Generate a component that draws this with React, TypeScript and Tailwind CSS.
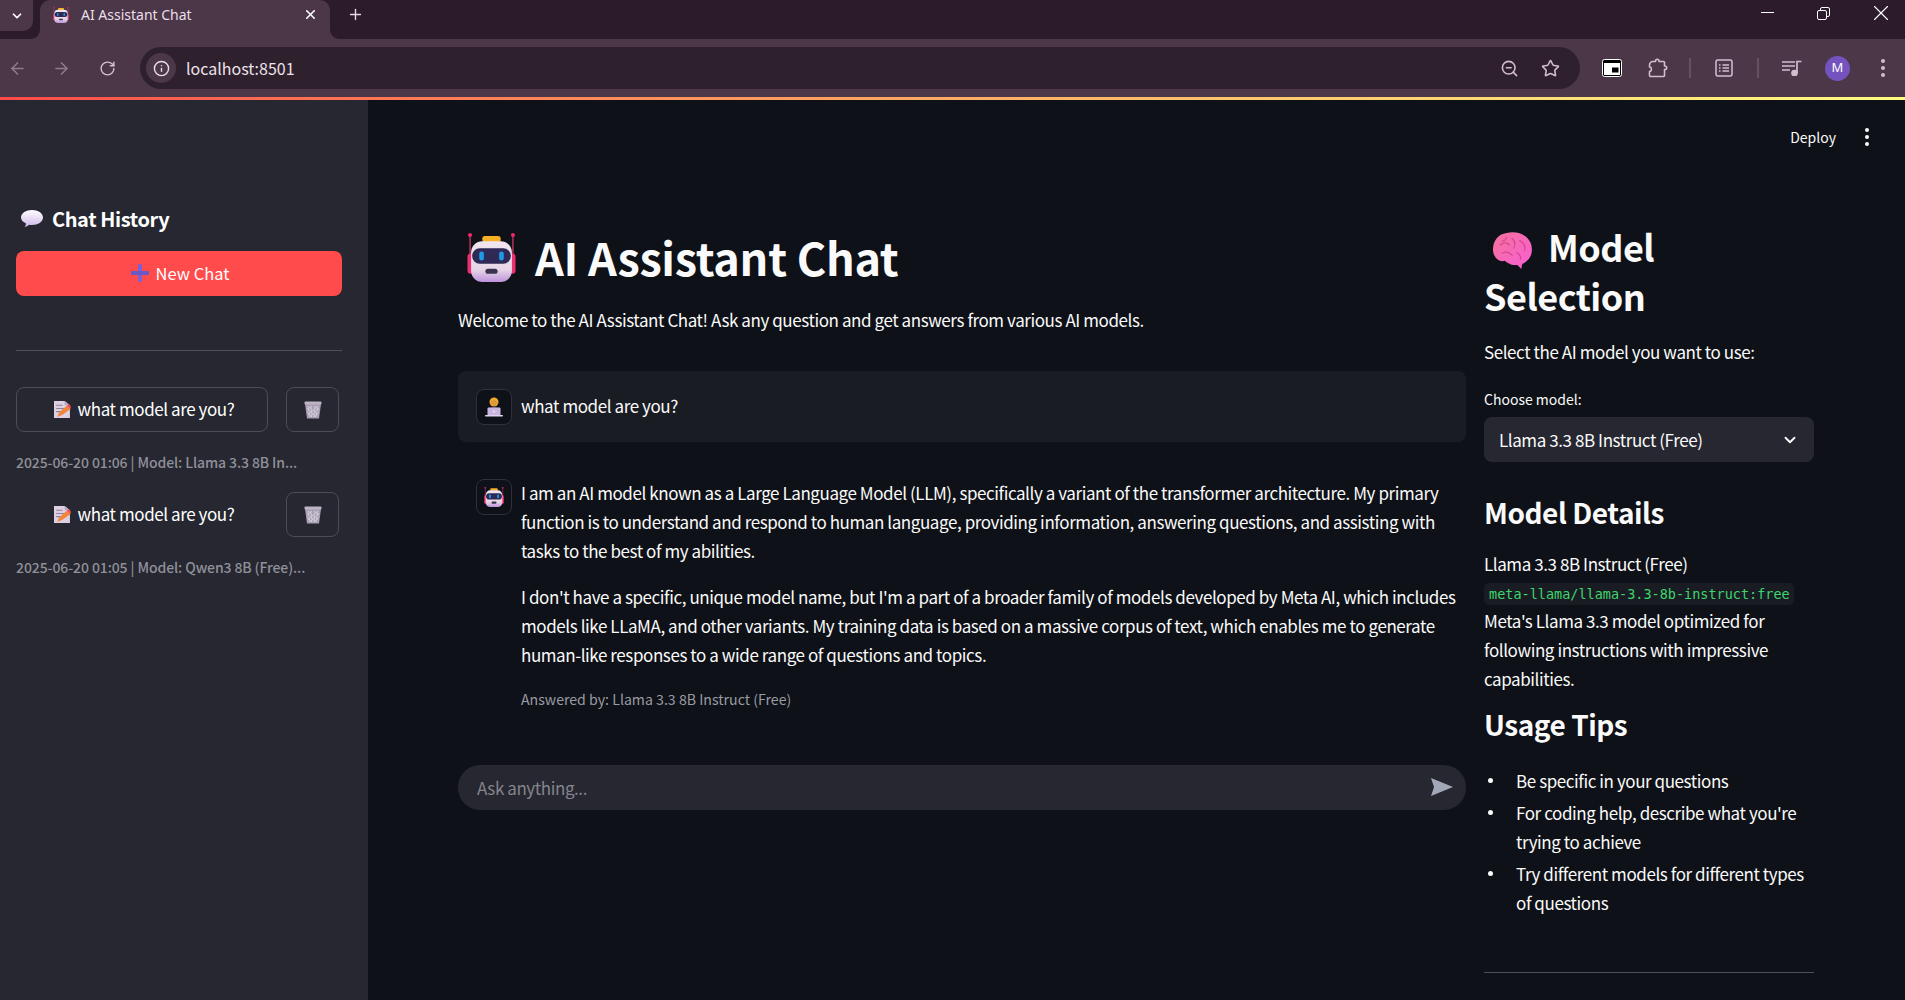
import { ArrowLeft, ArrowRight, ChevronDown, Info, Plus, RotateCw, Star, X, ZoomOut } from "lucide-react"

const font = { fontFamily: '"Noto Sans CJK SC", "Noto Sans", sans-serif' }

// emoji style drawings
const Robot = ({ size }: { size: number }) => (
    <svg width={size} height={size} viewBox="0 0 48 48">
        <defs>
            <linearGradient id="rb" x1="0" y1="0" x2="0" y2="1">
                <stop offset="0" stopColor="#f1e6f0" />
                <stop offset="0.7" stopColor="#e6d5e6" />
                <stop offset="1" stopColor="#bd93dc" />
            </linearGradient>
        </defs>
        <path d="M3 2v20M45 2v20" stroke="#d83a6a" strokeWidth="1.2" />
        <circle cx="3" cy="2" r="2" fill="#f0286a" />
        <circle cx="45" cy="2" r="2" fill="#f0286a" />
        <rect x="0.5" y="20" width="6" height="20" rx="3" fill="#f0306e" />
        <rect x="41.5" y="20" width="6" height="20" rx="3" fill="#f0306e" />
        <rect x="15" y="3" width="18" height="6" rx="2.5" fill="#f5b026" />
        <rect x="4" y="8" width="40" height="40" rx="11" fill="url(#rb)" />
        <rect x="5" y="15" width="38" height="15" rx="7.5" fill="#2f2a55" />
        <rect x="12" y="18" width="4.5" height="9" rx="2.2" fill="#1e9be8" />
        <rect x="31.5" y="18" width="4.5" height="9" rx="2.2" fill="#1e9be8" />
        <rect x="18" y="35" width="12" height="5" rx="2.5" fill="#3a3350" />
    </svg>
)

const Brain = () => (
    <svg width="41" height="37" viewBox="0 0 42 36" preserveAspectRatio="none">
        <defs>
            <linearGradient id="br" x1="0" y1="0" x2="1" y2="1">
                <stop offset="0" stopColor="#f4719a" />
                <stop offset="1" stopColor="#f95fd6" />
            </linearGradient>
        </defs>
        <path d="M1 17C1 9 6 2 15 1 23 -1 33 1 38 8 42 13 42 22 37 27 34 30 31 31 31 31L30 36 26 32C20 33 16 30 13 28 8 30 1 25 1 17Z" fill="url(#br)" />
        <path d="M8 13C12 9 16 10 18 13M20 6C24 9 24 13 22 16M28 8C33 11 35 15 33 19M10 21C14 18 18 20 21 23M25 20C28 21 30 24 29 27M15 5C14 8 12 9 10 9" stroke="#d23f8c" strokeWidth="1" fill="none" />
    </svg>
)

const Balloon = () => (
    <svg width="22" height="18" viewBox="0 0 22 18">
        <defs>
            <linearGradient id="bl" x1="0" y1="0" x2="0" y2="1">
                <stop offset="0" stopColor="#ffffff" />
                <stop offset="1" stopColor="#cdb8ea" />
            </linearGradient>
        </defs>
        <path d="M11 0C17 0 22 3 22 7.500 22 12 17 15 11 15 10 15 9 15 8 14.800 7 16 5 17 3.500 17 4.500 16 5 14.500 5 13.500 2 12 0 10 0 7.500 0 3 5 0 11 0Z" fill="url(#bl)" />
    </svg>
)

const PlusEmoji = () => (
    <svg width="18" height="18" viewBox="0 0 18 18">
        <rect x="7" y="0" width="4" height="18" rx="1.200" fill="#7a62d6" />
        <rect x="0" y="7" width="18" height="4" rx="1.200" fill="#6a58c8" />
    </svg>
)

const Memo = () => (
    <svg width="17" height="17" viewBox="0 0 16 16">
        <path d="M0 0H10L15 4V16H0Z" fill="#ddd0e2" />
        <path d="M10 0L15 4H10Z" fill="#b9a6c4" />
        <path d="M2 4H8M2 7H11M2 10H7" stroke="#8f8399" strokeWidth="1" />
        <path d="M3 15L5 10.500 12 4.500 15.500 7.500 8 13Z" fill="#f2853a" />
        <path d="M12 4.500L14 2.800 16 5.500 15.500 7.500Z" fill="#f0495e" />
    </svg>
)

const Trash = () => (
    <svg width="18" height="18" viewBox="0 0 18 18">
        <path d="M1 3H17L15 17.500H3Z" fill="#a79fb2" />
        <rect x="0.500" y="0.500" width="17" height="3" rx="1" fill="#bdb5c6" />
        <path d="M4 5L6 16M7 5L8 16M11 5L10 16M14 5L12 16M4 14L14 5M3.500 9L8 5M6 16L15 7M10 16L15 11M14 14L4 5M15 9L10 5M12 16L3 7M8 16L3 11" stroke="#e4dfe8" strokeWidth="0.500" />
    </svg>
)

const Technologist = () => (
    <svg width="20" height="20" viewBox="0 0 20 20">
        <circle cx="10" cy="5" r="4.500" fill="#f0a92c" />
        <circle cx="10" cy="6" r="3" fill="#d99a3e" />
        <path d="M4 12C5 10 15 10 16 12V18H4Z" fill="#7b6fb5" />
        <rect x="3.500" y="10.500" width="13" height="8" rx="1" fill="#c9b6e2" />
        <rect x="1" y="18" width="18" height="1.500" rx="0.700" fill="#e2d6ee" />
        <circle cx="10" cy="14.500" r="0.900" fill="#f2eef8" />
    </svg>
)

const ReadingList = () => (
    <svg width="18" height="18" viewBox="0 0 18 18" fill="none" stroke="#d3bdcf" strokeWidth="1.500">
        <rect x="1" y="1" width="16" height="16" rx="2" />
        <path d="M7.500 6H14M7.500 9H14M7.500 12H14" />
        <path d="M4 6H5.500M4 9H5.500M4 12H5.500" />
    </svg>
)

const Pip = () => (
    <svg width="20" height="18" viewBox="0 0 20 18">
        <rect x="0.500" y="0.500" width="19" height="17" rx="2" fill="#000" stroke="#fff" />
        <rect x="2" y="4" width="16" height="12" fill="#fff" />
        <rect x="10" y="8.500" width="6.500" height="5" fill="#000" />
    </svg>
)

const PuzzlePiece = () => (
    <svg width="21" height="20" viewBox="0 0 21 20" fill="none" stroke="#d3bdcf" strokeWidth="1.600" strokeLinejoin="round">
        <path d="M6 3.500H8.500C8.500 0.500 12 0.500 12 3.500H16.500C17.300 3.500 17.500 4 17.500 4.500V8C20.500 8 20.500 11.500 17.500 11.500V17.500C17.500 18.300 17 18.500 16.500 18.500H3.500C2.700 18.500 2.500 18 2.500 17.500V13.500C5 13.500 5 9 2.500 9V7.500C2.500 5 4 3.500 6 3.500Z" />
    </svg>
)

const MediaControl = () => (
    <svg width="20" height="16" viewBox="0 0 20 16" fill="none" stroke="#d3bdcf" strokeWidth="1.700">
        <path d="M0 2H13M0 6H13M0 10H8" />
        <path d="M15 13V1.500H19.500" />
        <circle cx="12.500" cy="13" r="2.500" fill="#d3bdcf" />
    </svg>
)

const Dots = ({ className }: { className: string }) => (
    <div className={`flex flex-col gap-[3px] ${className}`}>
        <span className="w-[4px] h-[4px] rounded-full bg-current"></span>
        <span className="w-[4px] h-[4px] rounded-full bg-current"></span>
        <span className="w-[4px] h-[4px] rounded-full bg-current"></span>
    </div>
)

const TabCorner = ({ flip }: { flip?: boolean }) => (
    <svg width="10" height="10" viewBox="0 0 10 10" className={flip ? "absolute bottom-0 left-full -scale-x-100" : "absolute bottom-0 right-full"}>
        <path d="M10 0V10H0C6 10 10 6 10 0Z" fill="#4b3748" />
    </svg>
)

const BrowserBar = () => (
    <div style={{ fontFamily: '"Noto Sans", sans-serif' }}>
        <div className="h-[39px] bg-[#2c1c2b] flex items-start">
            <div className="w-[33px] h-[31px] bg-[#4b3748] rounded-br-[10px] flex items-center justify-center text-white">
                <ChevronDown size={14} strokeWidth={3} />
            </div>
            <div className="relative ml-[7px] w-[290px] h-[39px] bg-[#4b3748] rounded-t-[10px] flex items-center pl-[13px] pr-[12px] pb-[10px]">
                <TabCorner />
                <TabCorner flip />
                <Robot size={16} />
                <span className="ml-[12px] text-[14px] text-[#eadfe8] flex-1">AI Assistant Chat</span>
                <X size={15} strokeWidth={2.5} className="text-white" />
            </div>
            <Plus size={17} strokeWidth={2} className="ml-[17px] mt-[6px] text-[#e6d8e3]" />
            <div className="flex-1 flex justify-end items-start text-white">
                <div className="w-[13px] h-[1px] bg-white mt-[12px] mr-[43px]"></div>
                <div className="relative w-[13px] h-[13px] mt-[7px] mr-[38px]">
                    <div className="absolute right-0 top-0 w-[10px] h-[10px] border border-white rounded-[2px]"></div>
                    <div className="absolute left-0 bottom-0 w-[10px] h-[10px] border border-white rounded-[2px] bg-[#2c1c2b]"></div>
                </div>
                <X size={26} strokeWidth={1} className="mr-[11px]" />
            </div>
        </div>
        <div className="h-[58px] bg-[#4b3748] flex items-center pl-[8px]">
            <ArrowLeft size={19} className="text-[#8f7b8c]" />
            <ArrowRight size={19} className="text-[#8f7b8c] ml-[25px]" />
            <RotateCw size={17} className="text-[#d3bdcf] ml-[28px]" />
            <div className="ml-[24px] w-[1440px] h-[42px] rounded-full bg-[#2f202e] flex items-center pl-[6px] pr-[20px]">
                <div className="w-[30px] h-[30px] rounded-full bg-[#4b3748] flex items-center justify-center">
                    <Info size={17} className="text-[#e9dfe7]" />
                </div>
                <span className="ml-[10px] text-[16px] text-[#ece3ea] flex-1" style={font}>localhost:8501</span>
                <ZoomOut size={19} className="text-[#d3bdcf]" />
                <Star size={19} className="ml-[22px] -mr-[0px] text-[#d3bdcf]" />
            </div>
            <div className="ml-[22px]"><Pip /></div>
            <div className="ml-[25px]"><PuzzlePiece /></div>
            <div className="ml-[21px] w-[2px] h-[20px] bg-[#655261]"></div>
            <div className="ml-[24px]"><ReadingList /></div>
            <div className="ml-[24px] w-[2px] h-[20px] bg-[#655261]"></div>
            <div className="ml-[23px]"><MediaControl /></div>
            <div className="ml-[23px] w-[25px] h-[25px] rounded-full bg-[#7553be] text-white text-[13px] flex items-center justify-center">M</div>
            <Dots className="ml-[31px] text-[#d3bdcf]" />
        </div>
        <div className="h-[3px] bg-linear-to-r from-[#ff4b4b] to-[#fffd80]"></div>
    </div>
)

const HistoryRow = ({ active, caption }: { active?: boolean; caption: string }) => (
    <div>
        <div className="flex">
            <div className={`w-[252px] h-[45px] pl-[4px] pb-[1px] rounded-[8px] flex items-center justify-center gap-[7px] text-[17px] tracking-[-0.42px] text-white border ${active ? "border-[#4b4c56]" : "border-transparent"}`}>
                <Memo />
                what model are you?
            </div>
            <div className="ml-[18px] w-[53px] h-[45px] rounded-[8px] border border-[#4b4c56] flex items-center justify-center">
                <Trash />
            </div>
        </div>
        <p className="mt-[19px] text-[14px] tracking-[-0.1px] leading-[22px] text-[#8f9099] font-medium whitespace-nowrap">{caption}</p>
    </div>
)

const Sidebar = () => (
    <aside className="w-[368px] shrink-0 bg-[#262730] pl-[16px] pr-[26px] pt-[103px] h-full">
        <div className="flex items-center pl-[5px] gap-[9px] h-[32px]">
            <Balloon />
            <h3 className="text-[20px] tracking-[-0.4px] font-semibold text-white leading-[32px]">Chat History</h3>
        </div>
        <div className="mt-[16px] w-[326px] h-[45px] pl-[2px] pb-[1px] rounded-[8px] bg-[#ff4b4b] text-white text-[16.500px] flex items-center justify-center gap-[7px]">
            <PlusEmoji />
            New Chat
        </div>
        <hr className="mt-[54px] border-[#4d4e58]" />
        <div className="mt-[36px] flex flex-col gap-[19px]">
            <HistoryRow active caption="2025-06-20 01:06 | Model: Llama 3.3 8B In..." />
            <HistoryRow caption="2025-06-20 01:05 | Model: Qwen3 8B (Free)..." />
        </div>
    </aside>
)

const ChatColumn = () => (
    <div className="w-[1008px] shrink-0">
        <div className="flex items-center h-[64px] mt-[51px] pl-[9px] gap-[19px]">
            <Robot size={49} />
            <h1 className="text-[45px] tracking-[-0.3px] font-bold text-[#fafafa] leading-[64px] whitespace-nowrap">AI Assistant Chat</h1>
        </div>
        <p className="mt-[16px] text-[17px] tracking-[-0.42px] leading-[29px] text-[#fafafa]">Welcome to the AI Assistant Chat! Ask any question and get answers from various AI models.</p>
        <div className="mt-[37px] h-[71px] rounded-[8px] bg-[#1a1c24] flex items-center pl-[18px] pr-[18px] gap-[9px]">
            <div className="w-[36px] h-[36px] rounded-[8px] bg-[#0e1117] border border-[#2e303a] flex items-center justify-center">
                <Technologist />
            </div>
            <p className="text-[17px] tracking-[-0.42px] text-[#fafafa] -mt-[1px]">what model are you?</p>
        </div>
        <div className="mt-[37px] flex pl-[18px] gap-[9px]">
            <div className="w-[36px] h-[36px] shrink-0 rounded-[8px] bg-[#0e1117] border border-[#2e303a] flex items-center justify-center">
                <Robot size={20} />
            </div>
            <div className="text-[17px] tracking-[-0.42px] leading-[28.800px] text-[#fafafa] -mr-[6px]">
                <p>I am an AI model known as a Large Language Model (LLM), specifically a variant of the transformer architecture. My primary function is to understand and respond to human language, providing information, answering questions, and assisting with tasks to the best of my abilities.</p>
                <p className="mt-[18px]">I don't have a specific, unique model name, but I'm a part of a broader family of models developed by Meta AI, which includes models like LLaMA, and other variants. My training data is based on a massive corpus of text, which enables me to generate human-like responses to a wide range of questions and topics.</p>
                <p className="mt-[18px] text-[14.150px] tracking-normal leading-[22px] text-[#9a9ba3]">Answered by: Llama 3.3 8B Instruct (Free)</p>
            </div>
        </div>
        <div className="mt-[55px] h-[45px] rounded-[22px] bg-[#262730] flex items-center pl-[19px] pr-[13px] justify-between">
            <span className="text-[17px] tracking-[-0.42px] text-[#83848c]">Ask anything...</span>
            <svg width="22" height="18" viewBox="0 0 22 18"><path d="M0 0L22 9 0 18 3 9Z" fill="#a3a8b8" /></svg>
        </div>
    </div>
)

const tips = [
    "Be specific in your questions",
    "For coding help, describe what you're trying to achieve",
    "Try different models for different types of questions",
]

const ModelColumn = () => (
    <div className="w-[330px] shrink-0 text-[#fafafa]">
        <h2 className="mt-[48px] text-[36px] tracking-[-0.5px] font-semibold leading-[49px]">
            <span className="inline-flex align-middle ml-[8px] mr-[15px] -mt-[4px]"><Brain /></span>Model Selection
        </h2>
        <p className="mt-[17px] text-[17px] tracking-[-0.42px] leading-[29px]">Select the AI model you want to use:</p>
        <label className="block mt-[22px] text-[14px] leading-[22px]">Choose model:</label>
        <div className="mt-[7px] h-[45px] rounded-[8px] bg-[#262730] flex items-center justify-between pl-[15px] pr-[15px] text-[17px] tracking-[-0.42px]">
            Llama 3.3 8B Instruct (Free)
            <ChevronDown size={18} strokeWidth={2.5} />
        </div>
        <h3 className="mt-[29px] text-[28px] tracking-[-0.45px] font-semibold leading-[42px]">Model Details</h3>
        <p className="mt-[16px] text-[17px] tracking-[-0.42px] leading-[29px]">Llama 3.3 8B Instruct (Free)</p>
        <code className="block w-[310px] h-[22px] mt-[5px] rounded-[5px] bg-[#1a1c24] px-[5px] text-[13.500px] leading-[22px] text-[#3dd56d] whitespace-nowrap" style={{ fontFamily: '"DejaVu Sans Mono", monospace' }}>meta-llama/llama-3.3-8b-instruct:free</code>
        <p className="text-[17px] tracking-[-0.42px] leading-[29px] mt-[1px]">Meta's Llama 3.3 model optimized for following instructions with impressive capabilities.</p>
        <h3 className="mt-[10px] text-[28px] tracking-[-0.45px] font-semibold leading-[42px]">Usage Tips</h3>
        <ul className="mt-[21px] text-[17px] tracking-[-0.42px] leading-[29px] flex flex-col gap-[3px]">
            {tips.map((tip) => (
                <li key={tip} className="flex">
                    <span className="w-[32px] shrink-0"><span className="block w-[5px] h-[5px] ml-[4px] mt-[12px] rounded-full bg-[#fafafa]"></span></span>
                    <span>{tip}</span>
                </li>
            ))}
        </ul>
        <hr className="mt-[55px] border-[#4d4e58]" />
    </div>
)

const App: React.FunctionComponent = () => {
    return (
        <div className="h-screen w-full overflow-hidden bg-[#0e1117] flex flex-col" style={font}>
            <BrowserBar />
            <div className="flex flex-1 min-h-0">
                <Sidebar />
                <main className="flex-1 min-w-0">
                    <div className="h-[74px] flex items-center justify-end pr-[36px] gap-[29px] text-[#fafafa]">
                        <span className="text-[14px]">Deploy</span>
                        <Dots className="" />
                    </div>
                    <div className="flex pl-[90px] gap-[18px]">
                        <ChatColumn />
                        <ModelColumn />
                    </div>
                </main>
            </div>
        </div>
    )
}

export default App
